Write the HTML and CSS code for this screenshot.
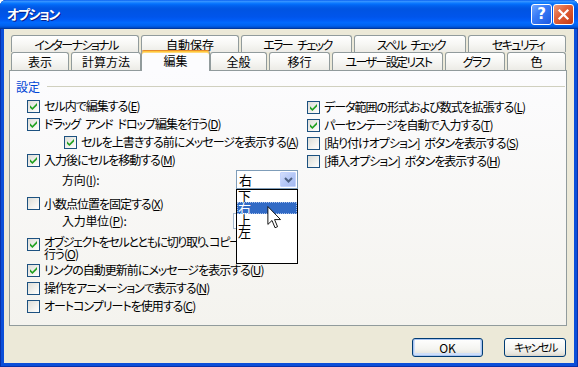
FILE: index.html
```html
<!DOCTYPE html>
<html lang="ja">
<head>
<meta charset="utf-8">
<title>オプション</title>
<link rel="stylesheet" href="styles.css">
</head>
<body>
<div class="window">
  <div class="titlebar">
    <span class="title">オプション</span>
    <div class="tbtns">
      <span class="tbtn help">?</span>
      <span class="tbtn close"><svg width="13" height="13" viewBox="0 0 13 13"><path d="M2.5 2.5l8 8M10.5 2.5l-8 8" stroke="#fff" stroke-width="2.2" stroke-linecap="square"/></svg></span>
    </div>
  </div>
  <div class="client">
    <div class="tabs">
      <div class="tabrow row1">
        <div class="tab kana w-intl">インターナショナル</div>
        <div class="tab w-auto">自動保存</div>
        <div class="tab kana w-err">エラー チェック</div>
        <div class="tab kana w-spell">スペル チェック</div>
        <div class="tab kana w-sec">セキュリティ</div>
      </div>
      <div class="tabrow row2">
        <div class="tab w-view">表示</div>
        <div class="tab w-calc">計算方法</div>
        <div class="tab sel w-edit">編集</div>
        <div class="tab w-gen">全般</div>
        <div class="tab w-move">移行</div>
        <div class="tab kana w-user">ユーザー設定リスト</div>
        <div class="tab kana w-graph">グラフ</div>
        <div class="tab w-color">色</div>
      </div>
    </div>
    <div class="panel">
      <div class="grp"><span class="grp-label">設定</span><span class="grp-line"></span></div>
      <div class="cols">
        <div class="col left">
          <div class="row"><span class="cb"><svg class="ck" viewBox="0 0 11 11"><path d="M2 4.3l2.4 2.4 4.6-4.6v2.4l-4.6 4.6-2.4-2.4z"/></svg></span><span class="lbl">セル内で編集する(<u>E</u>)</span></div>
          <div class="row"><span class="cb"><svg class="ck" viewBox="0 0 11 11"><path d="M2 4.3l2.4 2.4 4.6-4.6v2.4l-4.6 4.6-2.4-2.4z"/></svg></span><span class="lbl">ドラッグ アンド ドロップ編集を行う(<u>D</u>)</span></div>
          <div class="row indent"><span class="cb"><svg class="ck" viewBox="0 0 11 11"><path d="M2 4.3l2.4 2.4 4.6-4.6v2.4l-4.6 4.6-2.4-2.4z"/></svg></span><span class="lbl">セルを上書きする前にメッセージを表示する(<u>A</u>)</span></div>
          <div class="row"><span class="cb"><svg class="ck" viewBox="0 0 11 11"><path d="M2 4.3l2.4 2.4 4.6-4.6v2.4l-4.6 4.6-2.4-2.4z"/></svg></span><span class="lbl">入力後にセルを移動する(<u>M</u>)</span></div>
          <div class="row sub dir">
            <span class="sub-label w-dir">方向(<u>I</u>):</span>
            <div class="combo">
              <span class="combo-val">右</span>
              <span class="combo-btn"><svg width="9" height="6" viewBox="0 0 9 6"><path d="M1 1l3.5 3.5L8 1" fill="none" stroke="#4d6185" stroke-width="2"/></svg></span>
              <div class="droplist">
                <div class="item">下</div>
                <div class="item hl">右</div>
                <div class="item">上</div>
                <div class="item">左</div>
                <svg class="cursor" width="17" height="23" viewBox="0 0 12.5 20"><path d="M0.5 0.5V16l3.6-3.4 2.6 6.3 2.2-0.9-2.6-6.2h5.2z" fill="#fff" stroke="#000" stroke-width="0.8" stroke-linejoin="miter"/></svg>
              </div>
            </div>
          </div>
          <div class="row fix"><span class="cb"></span><span class="lbl">小数点位置を固定する(<u>X</u>)</span></div>
          <div class="row sub unit">
            <span class="sub-label w-unit">入力単位(<u>P</u>):</span>
            <span class="textbox"></span>
          </div>
          <div class="row multi"><span class="cb"><svg class="ck" viewBox="0 0 11 11"><path d="M2 4.3l2.4 2.4 4.6-4.6v2.4l-4.6 4.6-2.4-2.4z"/></svg></span><span class="lbl mtext"><span class="tight">オブジェクトをセルとともに切り取り、コピー、並べ替えを</span><br>行う(<u>O</u>)</span></div>
          <div class="row after"><span class="cb"><svg class="ck" viewBox="0 0 11 11"><path d="M2 4.3l2.4 2.4 4.6-4.6v2.4l-4.6 4.6-2.4-2.4z"/></svg></span><span class="lbl">リンクの自動更新前にメッセージを表示する(<u>U</u>)</span></div>
          <div class="row"><span class="cb"></span><span class="lbl">操作をアニメーションで表示する(<u>N</u>)</span></div>
          <div class="row"><span class="cb"></span><span class="lbl">オートコンプリートを使用する(<u>C</u>)</span></div>
        </div>
        <div class="col right">
          <div class="row"><span class="cb"><svg class="ck" viewBox="0 0 11 11"><path d="M2 4.3l2.4 2.4 4.6-4.6v2.4l-4.6 4.6-2.4-2.4z"/></svg></span><span class="lbl">データ範囲の形式および数式を拡張する(<u>L</u>)</span></div>
          <div class="row"><span class="cb"><svg class="ck" viewBox="0 0 11 11"><path d="M2 4.3l2.4 2.4 4.6-4.6v2.4l-4.6 4.6-2.4-2.4z"/></svg></span><span class="lbl">パーセンテージを自動で入力する(<u>T</u>)</span></div>
          <div class="row"><span class="cb"></span><span class="lbl">[貼り付けオプション] ボタンを表示する(<u>S</u>)</span></div>
          <div class="row"><span class="cb"></span><span class="lbl">[挿入オプション] ボタンを表示する(<u>H</u>)</span></div>
        </div>
      </div>
    </div>
    <div class="buttons">
      <button class="btn ok">OK</button>
      <button class="btn cancel">キャンセル</button>
    </div>
  </div>
</div>
</body>
</html>
```

FILE: styles.css
```css
* { box-sizing: border-box; }
html, body { margin: 0; padding: 0; }
body {
  width: 578px;
  height: 367px;
  overflow: hidden;
  background: #ffffff;
  font-family: "Noto Sans CJK JP", "Noto Sans", sans-serif;
  font-size: 12px;
  font-feature-settings: "palt";
  color: #000;
}

.window {
  width: 578px;
  height: 367px;
  display: flex;
  flex-direction: column;
  background: #0b4fd9;
  border-radius: 6px 6px 0 0;
  overflow: hidden;
  box-shadow: inset 0 0 0 1px #0831a9;
}

.titlebar {
  height: 29px;
  flex: none;
  display: flex;
  align-items: center;
  padding: 0 4px 1px 7px;
  background: linear-gradient(to bottom, #0058ee 0%, #3a93ff 4%, #288eff 7%, #127dff 10%, #036ffc 14%, #0262ee 20%, #0057e5 28%, #0054e3 34%, #0055eb 58%, #005bf5 68%, #026afe 78%, #0062ef 88%, #0052d6 94%, #0040ab 97%, #003092 100%);
}
.title {
  flex: 1;
  color: #fff;
  font-weight: bold;
  font-size: 13px;
  line-height: 16px;
  letter-spacing: -1.4px;
  text-shadow: 1px 1px 0 #0a1e8a;
}
.tbtns { display: flex; gap: 1px; }
.tbtn {
  width: 21px;
  height: 21px;
  border: 1px solid #fff;
  border-radius: 3px;
  display: flex;
  align-items: center;
  justify-content: center;
}
.help {
  background: linear-gradient(135deg, #72a8ff 0%, #3a7cf7 40%, #1b58e2 100%);
  color: #fff;
  font-family: "DejaVu Sans", sans-serif;
  font-weight: bold;
  font-size: 15px;
  line-height: 1;
}
.close {
  background: linear-gradient(135deg, #f09a7a 0%, #e2623a 40%, #c53a12 100%);
}

.client {
  flex: 1;
  margin: 0 4px 4px;
  background: #ece9d8;
  padding: 6px 7px 6px 5px;
  display: flex;
  flex-direction: column;
}

/* Tabs */
.tabs {
  margin-left: 2px;
  height: 35px;
  flex: none;
  display: flex;
  flex-direction: column;
}
.tabrow { display: flex; gap: 2px; }
.row1 { height: 17px; }
.row2 { height: 18px; }
.tab {
  height: 100%;
  border: 1px solid #919b9c;
  border-bottom: none;
  border-radius: 3px 3px 0 0;
  background: linear-gradient(#ffffff, #f7f7f4 50%, #ecebe6);
  display: flex;
  align-items: center;
  justify-content: center;
  white-space: nowrap;
  line-height: 1;
  padding-top: 1px;
}
.tab.kana { letter-spacing: -1.6px; word-spacing: 4px; padding-left: 2px; }
.tab.sel {
  position: relative;
  z-index: 2;
  height: 21px;
  margin: -2px -2px -1px;
  background: #fcfcfe;
  border-top: 1px solid #e68b2c;
  box-shadow: inset 0 1px 0 #ffc83c, inset 0 2px 0 #ffd97a;
  padding-top: 0;
}
.w-intl { width: 128px; }
.w-auto { width: 98px; }
.w-err { width: 111px; }
.w-spell { width: 112px; }
.w-sec { width: 98px; }
.w-view { width: 58px; }
.w-calc { width: 70px; }
.w-edit { width: 69px; }
.w-gen { width: 57px; }
.w-move { width: 61px; }
.w-user { width: 111px; }
.w-graph { width: 60px; }
.w-color { width: 59px; }

/* Panel */
.panel {
  height: 256px;
  flex: none;
  border: 1px solid #919b9c;
  background: linear-gradient(#fcfcfe, #f4f3ee);
  padding-top: 8px;
}
.grp {
  height: 15px;
  display: flex;
  align-items: center;
  gap: 7px;
  padding: 0 1px 0 6px;
}
.grp-label { color: #0046d5; line-height: 15px; }
.grp-line { flex: 1; height: 1px; background: #d0d0bf; }

.cols { display: flex; margin-top: 3px; }
.col { display: flex; flex-direction: column; }
.left { width: 297px; padding-left: 17px; }
.right { flex: 1; margin-top: 1px; }

.row {
  display: flex;
  align-items: center;
  height: 18px;
  white-space: nowrap;
  line-height: 14px;
}
.lbl { letter-spacing: -1px; word-spacing: 3px; }
.row u { text-decoration: underline; text-underline-offset: 1px; }
.indent { padding-left: 37px; }

.cb {
  width: 13px;
  height: 13px;
  flex: none;
  margin-right: 4px;
  border: 1px solid #1c5180;
  background: linear-gradient(135deg, #dcdcd7 0%, #f2f2ee 60%, #ffffff 100%);
  display: flex;
  align-items: center;
  justify-content: center;
}
.ck { width: 11px; height: 11px; fill: #21a121; }

.sub { padding-left: 35px; }
.sub-label { display: block; letter-spacing: -0.3px; }
.w-dir { width: 174px; }
.w-unit { width: 171px; }
.dir { height: 21px; }
.fix { height: 17px; margin-top: 5px; }
.unit { height: 17px; }

.combo {
  position: relative;
  width: 62px;
  height: 19px;
  border: 1px solid #7f9db9;
  background: #fff;
  display: flex;
  align-items: center;
  padding: 0 1px 0 2px;
}
.combo-val { flex: 1; font-size: 13px; line-height: 16px; }
.combo-btn {
  width: 16px;
  height: 15px;
  border: 1px solid #c3d3fd;
  border-radius: 1px;
  background: linear-gradient(135deg, #d2ddfc 0%, #b6c8f6 50%, #a4b9f0 100%);
  display: flex;
  align-items: center;
  justify-content: center;
}

.droplist {
  position: absolute;
  z-index: 10;
  left: -1px;
  top: 18px;
  width: 62px;
  height: 75px;
  background: #fff;
  border: 1px solid #000;
}
.item {
  height: 12px;
  line-height: 11px;
  font-size: 13px;
  padding-left: 1px;
}
.item.hl {
  background: #316ac5;
  color: #fff;
  outline: 1px dotted #a8c0ea;
  outline-offset: -1px;
}
.cursor {
  position: absolute;
  left: 29px;
  top: 16px;
}

.textbox {
  width: 56px;
  height: 16px;
  border: 1px solid #a5b9cf;
  background: #fff;
  display: block;
}

.multi {
  height: 24px;
  margin-top: 7px;
  align-items: flex-start;
}
.multi .cb { margin-top: 2px; }
.mtext { line-height: 12px; }
.tight { letter-spacing: -1.4px; }
.after { margin-top: 1px; }

/* Buttons */
.buttons {
  margin-top: 12px;
  display: flex;
  justify-content: flex-end;
  gap: 21px;
  padding-right: 1px;
}
.btn {
  height: 19px;
  border: 1px solid #003c74;
  border-radius: 3px;
  background: linear-gradient(#ffffff 0%, #f4f4f0 60%, #e6e4dc 88%, #d6d0c5 100%);
  font-family: "Noto Sans CJK JP", sans-serif;
  font-size: 12px;
  font-feature-settings: "palt";
  line-height: 15px;
  padding: 0;
  color: #000;
}
.ok {
  width: 71px;
  box-shadow: inset 0 0 0 1px #a9c4f0, inset 0 -1px 0 2px #cfdff9;
}
.cancel { width: 62px; font-size: 11px; letter-spacing: -1.4px; padding-left: 1px; }
```
